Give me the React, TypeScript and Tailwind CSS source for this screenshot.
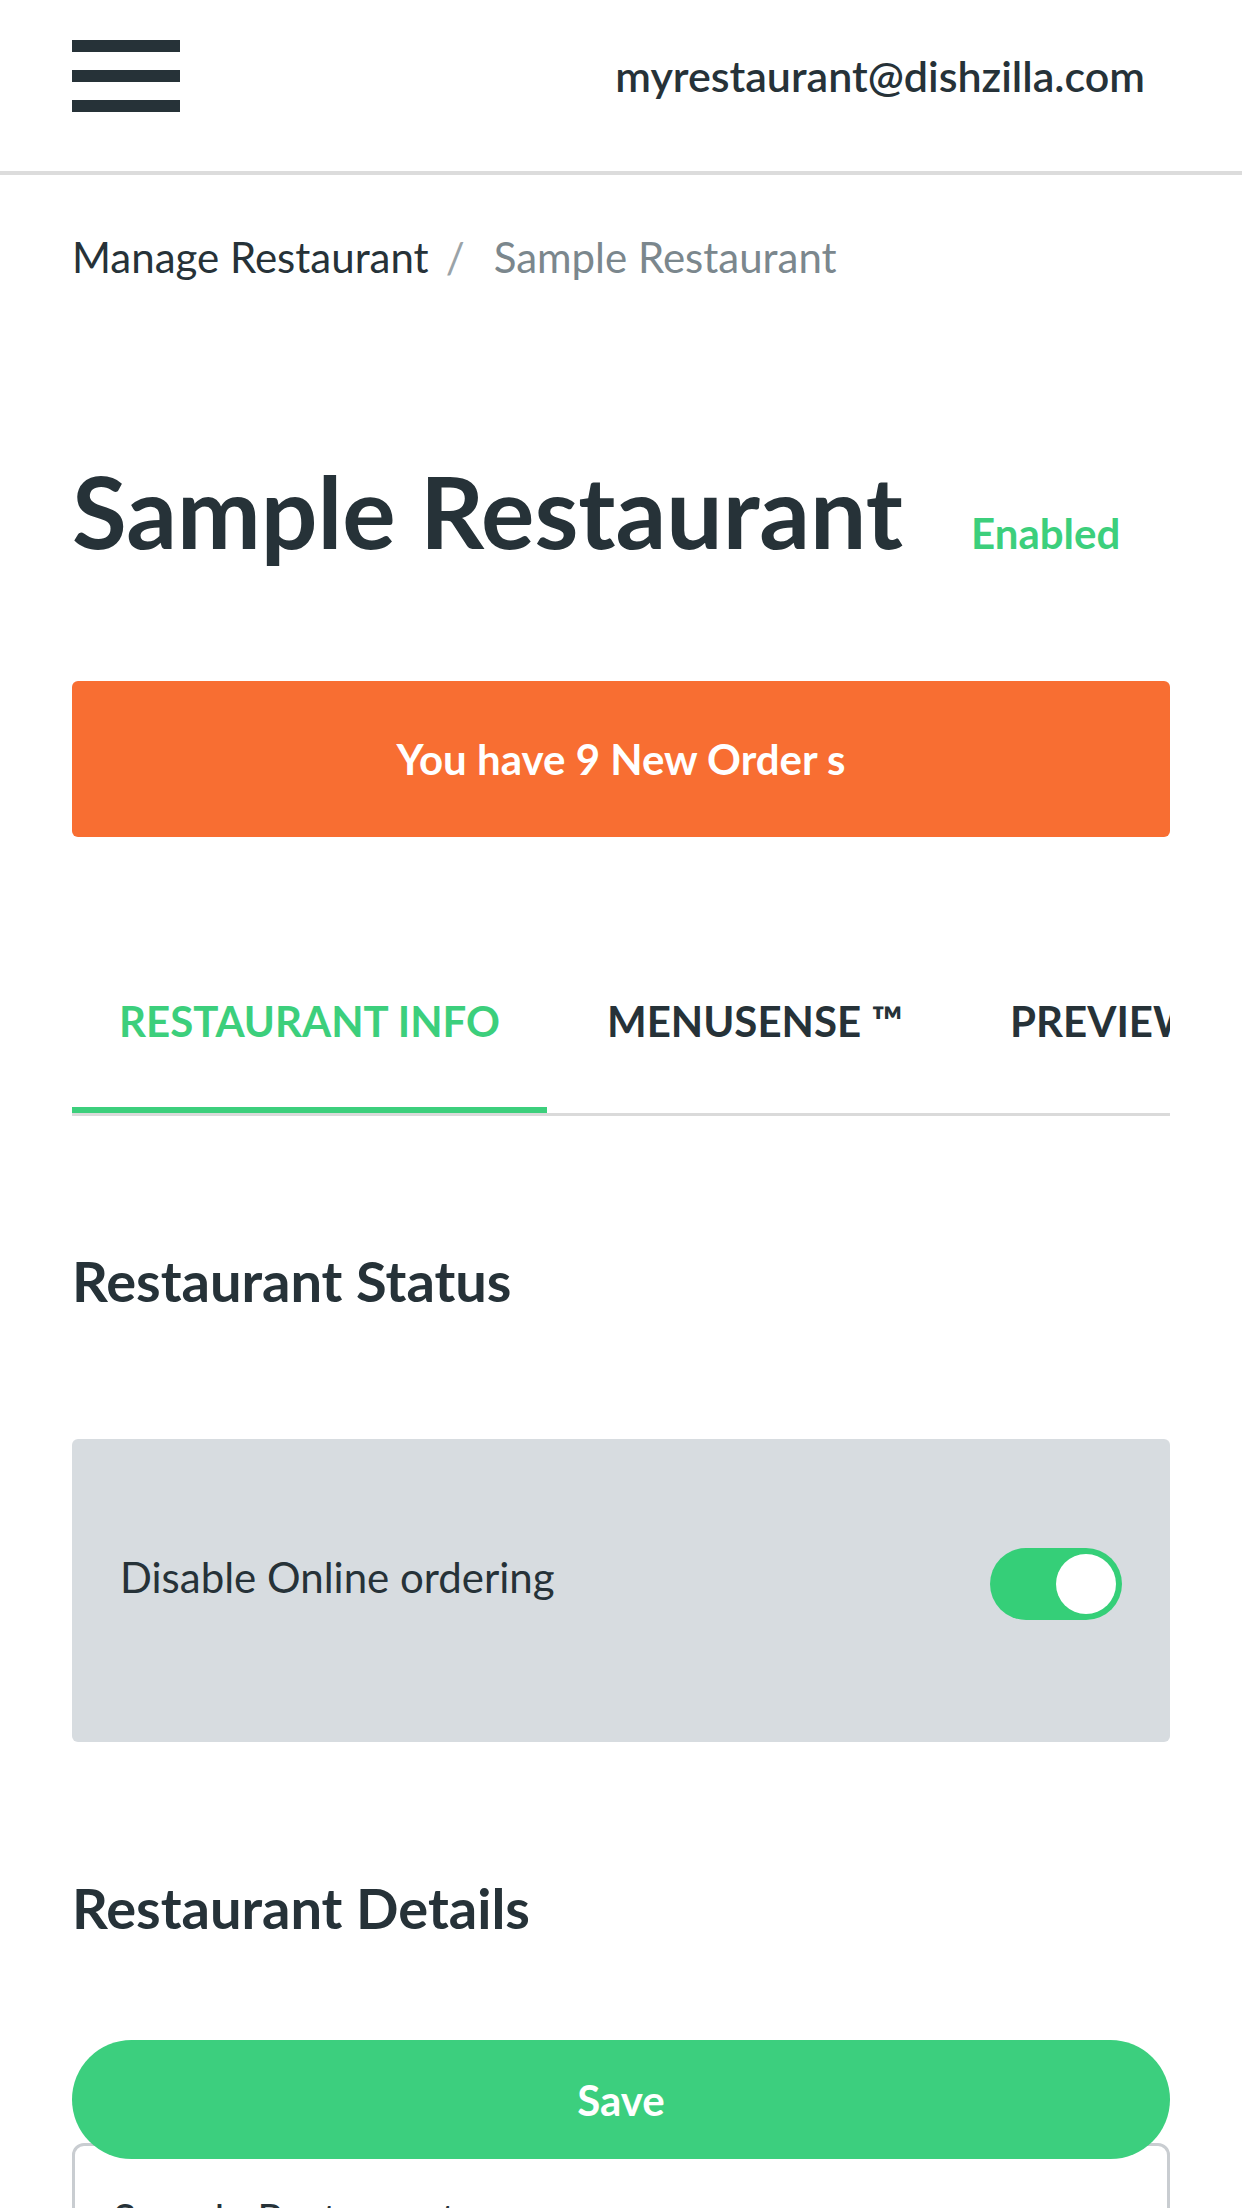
import React, { useState } from 'react';

const tabs = ['Restaurant Info', 'MenuSense ™', 'Preview'];

const App: React.FC = () => {
  const [active, setActive] = useState(0);
  const [disabled, setDisabled] = useState(true);

  return (
    <div className="min-h-screen bg-white text-[#263238] overflow-hidden" style={{ fontFamily: 'Lato, "Noto Sans", sans-serif' }}>
      {/* Header */}
      <header className="h-[175px] pb-[19px] px-[72px] flex items-center justify-between border-b-4 border-[#dcdcdc]">
        <button className="flex flex-col gap-[18px] w-[108px]">
          <span className="block h-[12px] w-[108px] bg-[#263238]" />
          <span className="block h-[12px] w-[108px] bg-[#263238]" />
          <span className="block h-[12px] w-[108px] bg-[#263238]" />
        </button>
        <div className="mr-[25px] text-[43px] leading-[52px] font-semibold">myrestaurant@dishzilla.com</div>
      </header>

      <main className="px-[72px]">
        {/* Breadcrumb */}
        <nav className="mt-[57px] flex items-baseline text-[42px] leading-[50px]">
          <span className="text-[#263238]">Manage Restaurant</span>
          <span className="ml-[17px] mr-[29px] text-[#9aa3a8]">/</span>
          <span className="text-[#7b878d]">Sample Restaurant</span>
        </nav>

        {/* Title */}
        <div className="mt-[168px] flex items-baseline">
          <h1 className="text-[100px] leading-[120px] font-bold">Sample Restaurant</h1>
          <span className="ml-[68px] text-[42px] leading-[50px] font-bold text-[#3ccf7c]">Enabled</span>
        </div>

        {/* New orders banner */}
        <div className="mt-[111px] h-[156px] rounded-[6px] bg-[#f86e32] flex items-center justify-center">
          <span className="text-[42px] leading-[50px] font-bold text-white">You have 9 New Order s</span>
        </div>

        {/* Tabs */}
        <div className="mt-[98px] border-b-[3px] border-[#dadada] overflow-hidden">
          <div className="flex gap-[13px] whitespace-nowrap">
            {tabs.map((t, i) => (
              <button
                key={t}
                onClick={() => setActive(i)}
                className={
                  'px-[47px] pt-[61px] pb-[61px] border-b-[6px] text-[42px] leading-[50px] font-bold uppercase ' +
                  (active === i ? 'border-[#3ccf7c] text-[#3ccf7c]' : 'border-transparent text-[#263238]')
                }
              >
                {t}
              </button>
            ))}
          </div>
        </div>

        {/* Restaurant Status */}
        <h2 className="mt-[131px] text-[56px] leading-[67px] font-bold">Restaurant Status</h2>

        <div className="mt-[125px] h-[303px] rounded-[6px] bg-[#d7dce0] px-[48px] flex items-center justify-between">
          <span className="mb-[27px] text-[42px] leading-[50px]">Disable Online ordering</span>
          <button
            onClick={() => setDisabled(!disabled)}
            className={
              'mb-[13px] w-[132px] h-[72px] rounded-full p-[6px] flex items-center ' +
              (disabled ? 'bg-[#35cf78] justify-end' : 'bg-[#aab2b8] justify-start')
            }
          >
            <span className="block w-[60px] h-[60px] rounded-full bg-white" />
          </button>
        </div>

        {/* Restaurant Details */}
        <h2 className="mt-[132px] text-[56px] leading-[67px] font-bold">Restaurant Details</h2>

        <button className="relative z-10 mt-[99px] w-full h-[119px] rounded-full bg-[#3ccf7e] text-white text-[42px] leading-[50px] font-bold">
          Save
        </button>

        <div className="-mt-[16px] rounded-[12px] border-[3px] border-[#c9cdd1] px-[38px] pt-[48px] pb-[48px]">
          <div className="text-[42px] leading-[50px]">Sample Restaurant</div>
        </div>
      </main>
    </div>
  );
};

export default App;
